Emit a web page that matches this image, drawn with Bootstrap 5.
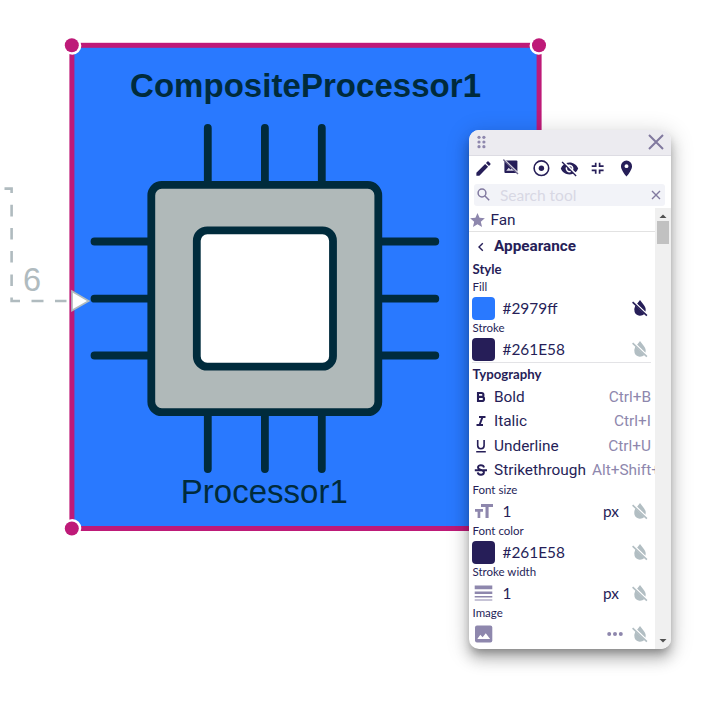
<!DOCTYPE html>
<html lang="en">
<head>
<meta charset="utf-8">
<meta name="viewport" content="width=device-width, initial-scale=1">
<title>Diagram editor</title>
<link href="https://cdn.jsdelivr.net/npm/bootstrap@5.3.0/dist/css/bootstrap.min.css" rel="stylesheet">
<style>
body{height:707px;overflow:hidden;background:#fff;color:#261e58;font-family:Lato,sans-serif}
.canvas{width:724px;height:707px}
.canvas text{font-family:"Liberation Sans",Arial,sans-serif}
.palette{left:469px;top:130.4px;width:202px;height:519px;border-radius:10px;background:#fff;box-shadow:0 6px 8px -3px rgba(0,0,0,.3),0 10px 14px 1px rgba(0,0,0,.18),0 4px 22px 3px rgba(0,0,0,.14)}
.palette svg{flex:none;display:block}
.palette-head{height:25.6px;background:#ecebf0;border-bottom:1px solid #dddce3;padding:0 7px 1px 8px}
.tools{height:26px;padding-left:5px;gap:9.5px}
.search{height:22px;margin:2px 6px 2px 5px;background:#f2f3f8;border-radius:3px;padding:0 4px 0 2px;line-height:22px;color:#d8d8e4}
.search-hint{font-size:15.5px}
.body-area{height:441.4px}
.items{width:186px;overflow:hidden}
.tool-row{height:24.4px;font:15.4px/24.4px Roboto,sans-serif;padding:1.8px 4px 0 5px;gap:6px;white-space:nowrap}
.short{color:#8e87ad}
.fav{height:24px;border-bottom:1px solid #e2e2e2;padding:.8px 0 0 .5px}
.section-head{height:29px;font:700 15.3px/29px Roboto,sans-serif;padding:.6px 0 0 5px;gap:6px}
.group-title{font-weight:700;font-size:13.2px;line-height:17px;height:18px;padding-left:3.5px}
.group-title.typo{height:20.5px;line-height:22px}
.lbl{font-size:11.5px;height:18px;line-height:16.6px;padding-left:3.5px}
.val{height:23px;font-size:15.4px;line-height:23px;padding:0 6px 0 3.5px}
.swatch{width:22.5px;height:23px;border-radius:4px;margin-left:-.3px;margin-right:7.8px}
.blue{background:#2979ff}.ink{background:#261e58}
.ic{width:22.5px;margin-left:-.5px;margin-right:8px}
.unit{margin-right:12px}
.rule{height:1px;background:#e3e3e6;margin:1.5px 4px 0 3px}
.sb{width:16px;background:#f0f0f0}
.thumb{width:12px;height:23px;background:#c1c1c1;margin:0 auto}
.dim{color:#b2bec3}.mid{color:#8e87ad}
</style>
<script src="https://cdn.jsdelivr.net/npm/bootstrap@5.3.0/dist/js/bootstrap.bundle.min.js"></script>
</head>
<body>
<svg width="0" height="0" class="position-absolute">
<symbol id="drop" viewBox="0 0 18 18"><path fill="currentColor" d="M9 .9 13 6.2Q15.7 9.8 14.2 12.9L5.9 4.9ZM4.3 6.4 13.5 14.9Q11.4 16.8 8.7 16.7 4.8 16.3 3.6 13 2.7 9.8 4.3 6.4Z"/><path stroke="#fff" stroke-width="1.3" d="M3.2 2.7 16.7 15.6"/><path stroke="currentColor" stroke-width="1.6" d="M1.6 3.1 15.9 16.7"/></symbol>
</svg>

<svg class="canvas d-block" viewBox="0 0 724 707">
<rect x="71.9" y="45.3" width="467.2" height="483.2" fill="#2979ff" stroke="#be1a78" stroke-width="5"/>
<g stroke="#002b3c" stroke-width="7.8" stroke-linecap="round">
<path d="M207.8 128V469M264.9 128V469M321.8 128V469M94.5 241.5H435.3M94.5 298.7H435.3M94.5 355.5H435.3"/>
<rect x="151.3" y="184.9" width="227" height="227.3" rx="10.5" fill="#b0b9b9"/>
<rect x="196.8" y="230.3" width="136.2" height="136.4" rx="10.5" fill="#fff"/>
</g>
<g fill="#002b3c"><text x="130" y="96.6" font-size="33" font-weight="700" textLength="351">CompositeProcessor1</text>
<text x="180.8" y="502.8" font-size="33" textLength="167">Processor1</text></g>
<g fill="none" stroke="#b0bbbf" stroke-width="2.6">
<path d="M4.5 188.6H11.6V193M11.6 204.8V216.5M11.6 228V239.5M11.6 251V262.5M11.6 274.5V286M11.6 297.6V301H20M31.5 301H43.5M55 301H66.5"/>
<path d="M72 291.2 88.7 300.9 72 310.6Z" fill="#fff" stroke-width="1.7"/></g>
<text x="23" y="291" font-size="32.5" fill="#b0bbbf">6</text>
<g fill="#fff"><circle cx="72.3" cy="45.7" r="9"/><circle cx="538.6" cy="45.7" r="9"/><circle cx="72.3" cy="528.1" r="9"/></g>
<g fill="#be1a78"><circle cx="71.8" cy="45.3" r="7"/><circle cx="539" cy="45.3" r="7"/><circle cx="71.8" cy="528.5" r="7"/></g>
</svg>

<section class="palette position-absolute overflow-hidden">
<header class="palette-head d-flex align-items-center justify-content-between">
<svg width="10" height="14" fill="#8e87ad"><circle cx="2" cy="2.3" r="1.6"/><circle cx="6.9" cy="2.3" r="1.6"/><circle cx="2" cy="7" r="1.6"/><circle cx="6.9" cy="7" r="1.6"/><circle cx="2" cy="11.7" r="1.6"/><circle cx="6.9" cy="11.7" r="1.6"/></svg>
<svg width="16" height="16" stroke="#81799f" stroke-width="2"><path d="M1 1 15 15M15 1 1 15"/></svg>
</header>
<div class="tools d-flex align-items-center">
<svg width="19" height="19" viewBox="0 0 24 24" fill="currentColor"><path d="M3 17.25V21h3.75L17.81 9.94l-3.75-3.75zM20.71 7.04a1 1 0 0 0 0-1.41l-2.34-2.34a1 1 0 0 0-1.41 0l-1.83 1.83 3.75 3.75z"/></svg>
<svg width="19" height="19"><rect x="1.4" y="1.4" width="13" height="12.6" rx="1" fill="currentColor"/><path d="M3.2 11.8 5.7 8.8 7.5 10.6 8.9 9.1 11.7 11.8Z" fill="#d9d6e4"/><path d="M1 .2 15.4 14.2" stroke="#fff" stroke-width="1.3"/><path d="M.3.6 15 14.9" stroke="#70698f" stroke-width="1.4"/></svg>
<svg width="19" height="19"><circle cx="10.4" cy="9.2" r="7.3" fill="none" stroke="currentColor" stroke-width="1.6"/><circle cx="10.4" cy="9.2" r="2.7" fill="currentColor"/></svg>
<svg width="19" height="19" viewBox="0 0 24 24" fill="currentColor"><path d="M12 7a5 5 0 0 1 4.64 6.83l2.92 2.92A11.8 11.8 0 0 0 23 12c-1.73-4.39-6-7.5-11-7.5-1.4 0-2.74.25-3.98.7l2.16 2.16C10.74 7.13 11.35 7 12 7zM2 4.27l2.74 2.74A11.8 11.8 0 0 0 1 12c1.73 4.39 6 7.5 11 7.5 1.55 0 3.03-.3 4.38-.84L19.73 22 21 20.73 3.27 3zM7.53 9.8l1.55 1.55A3 3 0 0 0 12.65 14.92l1.55 1.55A5 5 0 0 1 7.53 9.8zm4.31-.78 3.15 3.15.02-.16a3 3 0 0 0-3-3z"/></svg>
<svg width="19" height="19" stroke="currentColor" stroke-width="1.7" fill="none"><path d="M3.7 7.2H7.7V3.7M11.6 3.7V7.2H15.6M3.7 11.3H7.7V14.8M11.6 14.8V11.3H15.6"/></svg>
<svg width="19" height="19" viewBox="0 0 24 24" fill="currentColor"><path d="M12 2a7 7 0 0 0-7 7c0 5.25 7 13 7 13s7-7.75 7-13a7 7 0 0 0-7-7zm0 9.5a2.5 2.5 0 1 1 0-5 2.5 2.5 0 0 1 0 5z"/></svg>
</div>
<div class="search d-flex align-items-center">
<svg width="16" height="16" fill="none" stroke="#81799f" stroke-width="1.5"><circle cx="6" cy="6" r="3.9"/><path d="M9 9 13.2 13.2"/></svg>
<span class="search-hint flex-grow-1 ps-2">Search tool</span>
<svg width="10" height="10" stroke="#81799f" stroke-width="1.4"><path d="M1 1 9 9M9 1 1 9"/></svg>
</div>
<div class="body-area d-flex">
<div class="items">
<div class="tool-row fav d-flex align-items-center">
<svg class="mid" width="15" height="14" viewBox="0 0 20 19"><path fill="currentColor" d="M10 15.3 16.2 19 14.5 12 20 7.2 12.8 6.6 10 0 7.2 6.6 0 7.2 5.5 12 3.8 19Z"/></svg><span>Fan</span></div>
<div class="section-head d-flex align-items-center"><svg width="14" height="14" fill="none" stroke="currentColor" stroke-width="1.4"><path d="M8.8 3.2 5 7 8.8 10.8"/></svg><span>Appearance</span></div>
<div class="group-title">Style</div>
<div class="lbl">Fill</div>
<div class="val d-flex align-items-center"><span class="swatch blue"></span><span>#2979ff</span><svg class="ms-auto" width="18" height="18"><use href="#drop"/></svg></div>
<div class="lbl">Stroke</div>
<div class="val d-flex align-items-center"><span class="swatch ink"></span><span>#261E58</span><svg class="ms-auto dim" width="18" height="18"><use href="#drop"/></svg></div>
<div class="rule"></div>
<div class="group-title typo">Typography</div>
<div class="tool-row d-flex align-items-center"><svg width="14" height="14" fill="none" stroke="currentColor" stroke-width="2.1"><path d="M4 3H7.5A1.9 1.9 0 0 1 7.5 6.9H4M4 6.9H8A2 2 0 0 1 8 11H4ZM4 2V12"/></svg><span>Bold</span><span class="short ms-auto">Ctrl+B</span></div>
<div class="tool-row d-flex align-items-center"><svg width="14" height="14" fill="none" stroke="currentColor" stroke-width="2"><path d="M5 3H11.5M2.5 11H9M8.5 3 5.5 11"/></svg><span>Italic</span><span class="short ms-auto">Ctrl+I</span></div>
<div class="tool-row d-flex align-items-center"><svg width="14" height="14" fill="none" stroke="currentColor" stroke-width="1.6"><path d="M3.7 1V6.5A3.2 3.2 0 0 0 10.1 6.5V1M2.2 12.8H11.8"/></svg><span>Underline</span><span class="short ms-auto">Ctrl+U</span></div>
<div class="tool-row d-flex align-items-center"><svg width="14" height="14" fill="none" stroke="currentColor" stroke-width="1.9"><path d="M10 4.5C9.5 1.5 4 1.6 4 4.3 4 6.2 6 6.6 7.3 7 9 7.5 10.2 8.2 9.9 9.8 9.4 12.6 4 12.2 3.7 9.3M.8 7.2H13"/></svg><span>Strikethrough</span><span class="short ms-n1">Alt+Shift+</span></div>
<div class="lbl">Font size</div>
<div class="val d-flex align-items-center"><span class="ic mid"><svg width="23" height="20" fill="currentColor"><path d="M9 3H21V6H16.6V17H13.5V6H9ZM3 8H11V10.7H8.3V17H5.6V10.7H3Z"/></svg></span><span>1</span><span class="unit ms-auto">px</span><svg class="dim" width="18" height="18"><use href="#drop"/></svg></div>
<div class="lbl">Font color</div>
<div class="val d-flex align-items-center"><span class="swatch ink"></span><span>#261E58</span><svg class="ms-auto dim" width="18" height="18"><use href="#drop"/></svg></div>
<div class="lbl">Stroke width</div>
<div class="val d-flex align-items-center"><span class="ic mid"><svg width="23" height="18" fill="currentColor"><path d="M2.7 1.5H20.3V5.3H2.7ZM2.7 7.4H20.3V10H2.7ZM2.7 12H20.3V13.6H2.7ZM2.7 15.5H20.3V16.4H2.7Z"/></svg></span><span>1</span><span class="unit ms-auto">px</span><svg class="dim" width="18" height="18"><use href="#drop"/></svg></div>
<div class="lbl">Image</div>
<div class="val d-flex align-items-center"><span class="ic mid"><svg width="23" height="18"><rect x="3" y=".5" width="17.3" height="17" rx="2" fill="currentColor"/><path d="M5.3 14 8.3 9.8 10.6 12.3 13.8 8.3 18.1 14Z" fill="#fff"/></svg></span><svg class="ms-auto mid me-2" width="16" height="6" fill="currentColor"><circle cx="2.2" cy="3" r="2"/><circle cx="8" cy="3" r="2"/><circle cx="13.8" cy="3" r="2"/></svg><svg class="dim" width="18" height="18"><use href="#drop"/></svg></div>
</div>
<div class="sb d-flex flex-column">
<svg width="16" height="13"><path d="M4.5 10 8 6.5 11.5 10Z" fill="#505050"/></svg>
<div class="thumb"></div>
<svg class="mt-auto" width="16" height="13"><path d="M4.5 3 8 6.5 11.5 3Z" fill="#505050"/></svg>
</div>
</div>
</section>
</body>
</html>
